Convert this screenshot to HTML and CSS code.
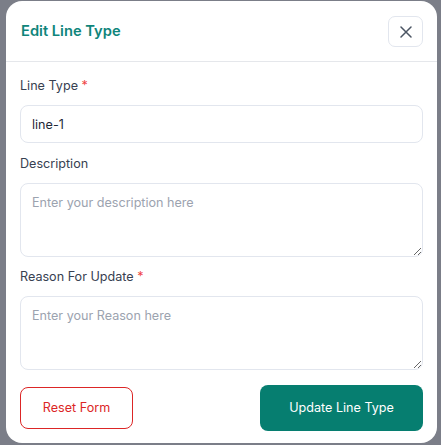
FILE: index.html
```html
<!DOCTYPE html>
<html lang="en">
<head>
<meta charset="utf-8">
<title>Edit Line Type</title>
<link rel="stylesheet" href="styles.css">
</head>
<body>
<div class="overlay">
  <div class="modal">
    <div class="modal-header">
      <h2 class="modal-title">Edit Line Type</h2>
      <button class="close-btn" type="button" aria-label="Close">
        <svg width="12" height="12" viewBox="0 0 12 12" fill="none" stroke="#4b5563" stroke-width="1.5" stroke-linecap="round">
          <path d="M1 1L11 11M11 1L1 11"/>
        </svg>
      </button>
    </div>
    <form class="modal-body">
      <div class="field">
        <label class="label">Line Type <span class="req">*</span></label>
        <input class="input" type="text" value="line-1">
      </div>
      <div class="field">
        <label class="label">Description</label>
        <textarea class="textarea" placeholder="Enter your description here"></textarea>
      </div>
      <div class="field">
        <label class="label">Reason For Update <span class="req">*</span></label>
        <textarea class="textarea" placeholder="Enter your Reason here"></textarea>
      </div>
      <div class="actions">
        <button class="btn btn-reset" type="button">Reset Form</button>
        <button class="btn btn-primary" type="button">Update Line Type</button>
      </div>
    </form>
  </div>
</div>
</body>
</html>
```

FILE: styles.css
```css
* { box-sizing: border-box; }
html, body {
  margin: 0;
  padding: 0;
  height: 100%;
}
body {
  background: #7b7e88;
  font-family: Inter, "Noto Sans", sans-serif;
  overflow: hidden;
}
.overlay {
  padding: 1px 4px 0 6px;
}
.modal {
  width: 431px;
  height: 442px;
  background: #ffffff;
  border-radius: 16px;
  display: flex;
  flex-direction: column;
}
.modal-header {
  height: 61px;
  border-bottom: 1px solid #e5e7eb;
  display: flex;
  align-items: center;
  justify-content: space-between;
  padding: 0 14px 0 15px;
  flex-shrink: 0;
}
.modal-title {
  margin: 0;
  font-size: 14.7px;
  font-weight: 600;
  color: #0f857b;
}
.close-btn {
  width: 35px;
  height: 31px;
  border: 1px solid #e2e6ee;
  border-radius: 7px;
  background: #fff;
  display: flex;
  align-items: center;
  justify-content: center;
  padding: 0;
  margin-top: 1px;
}
.modal-body {
  padding: 14px 14px 0 14px;
  display: flex;
  flex-direction: column;
}
.field {
  display: flex;
  flex-direction: column;
  margin-bottom: 10.5px;
}
.label {
  font-size: 12.6px;
  line-height: 20px;
  color: #374151;
  margin-bottom: 9px;
}
.req { color: #ef4444; }
.input, .textarea {
  font-family: Inter, "Noto Sans", sans-serif;
  font-size: 12.6px;
  line-height: 20px;
  color: #1f2937;
  border: 1px solid #e2e6ee;
  border-radius: 8px;
  padding: 9px 11px;
  background: #fff;
  outline: none;
  width: 100%;
}
.input { height: 38px; }
.textarea {
  height: 74px;
  resize: vertical;
  display: block;
}
.input::placeholder, .textarea::placeholder { color: #9ca3af; }
.actions {
  display: flex;
  justify-content: space-between;
  align-items: center;
  margin-top: 4px;
}
.btn {
  font-family: Inter, "Noto Sans", sans-serif;
  font-size: 12.6px;
  cursor: pointer;
}
.btn-reset {
  width: 113px;
  height: 42px;
  border: 1px solid #dc2626;
  border-radius: 8px;
  background: #fff;
  color: #dc2626;
}
.btn-primary {
  width: 163px;
  height: 46px;
  border: none;
  border-radius: 8px;
  background: #067e70;
  color: #ffffff;
  font-weight: 400;
}
```
